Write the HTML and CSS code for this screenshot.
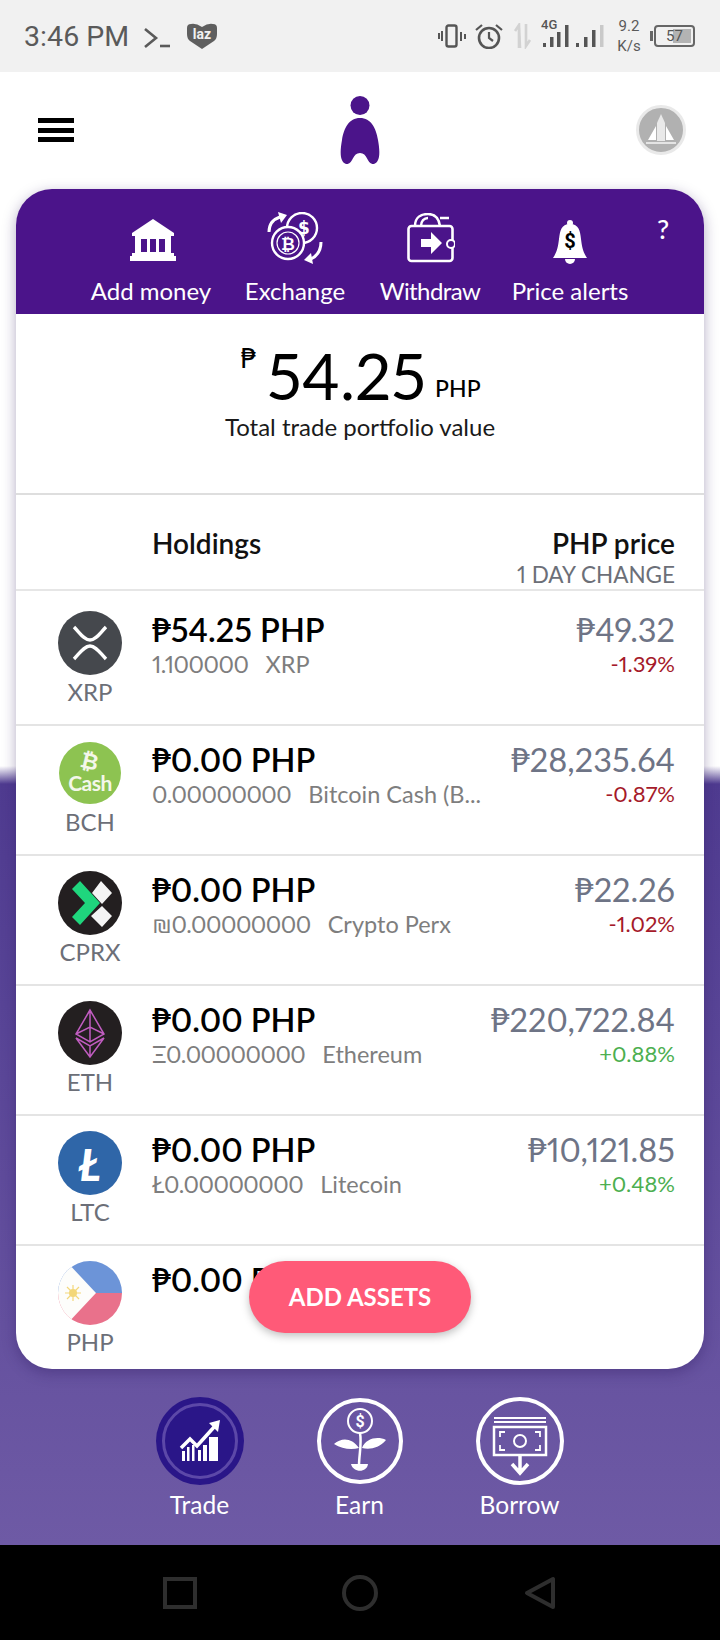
FILE: index.html
```html
<!DOCTYPE html>
<html lang="en">
<head>
  <meta charset="UTF-8">
  <title>Trade</title>
  <meta name="viewport" content="width=device-width, initial-scale=1">
  <link rel="stylesheet" href="styles.css">
</head>
<body>
  <div class="status-bar">
    <div class="status-left">
      <span class="clock">3:46 PM</span>
      <svg class="ic-prompt" width="28" height="22" viewBox="0 0 28 22"><path d="M2 2l11 9L2 20" fill="none" stroke="#5a5a5a" stroke-width="2.6"/><path d="M17 19h10" stroke="#5a5a5a" stroke-width="2.6"/></svg>
      <svg class="ic-laz" width="30" height="26" viewBox="0 0 30 26"><path d="M15 26L3 18Q0 16 0 11V5Q0 1 4 1Q9 0 15 4Q21 0 26 1Q30 1 30 5V11Q30 16 27 18Z" fill="#5f5f5f"/><text x="15" y="16" class="laz-text">laz</text></svg>
    </div>
    <div class="status-right">
      <svg width="28" height="24" viewBox="0 0 28 24"><rect x="8.5" y="1.5" width="10" height="21" rx="2" fill="none" stroke="#555" stroke-width="2.4"/><path d="M4 7v10M1 9v6M23 8v9M27 10v5" stroke="#555" stroke-width="2"/></svg>
      <svg class="ic-alarm" width="28" height="26" viewBox="0 0 28 26"><circle cx="14" cy="15" r="10" fill="none" stroke="#555" stroke-width="2.6"/><path d="M14 9v6l4 3M1 7l6-5M27 7l-6-5" fill="none" stroke="#555" stroke-width="2.2"/></svg>
      <svg class="ic-arrows" width="18" height="26" viewBox="0 0 18 26"><path d="M5 25V3M1 8l4-6 1 23M12 1v22l4-6" fill="none" stroke="#cfcfcf" stroke-width="2.6"/></svg>
      <div class="signal">
        <span class="net">4G</span>
        <svg width="66" height="24" viewBox="0 0 66 24"><g fill="#555"><rect x="3" y="19" width="3" height="4"/><rect x="10" y="13" width="3.5" height="10"/><rect x="17" y="8" width="3.5" height="15"/><rect x="25" y="1" width="3.5" height="22"/><rect x="36" y="19" width="3" height="4"/><rect x="44" y="13" width="3.5" height="10"/><rect x="52" y="6" width="3.5" height="17"/></g><rect x="60" y="1" width="3.5" height="22" fill="#c9c9c9"/></svg>
      </div>
      <div class="speed"><span>9.2</span><span>K/s</span></div>
      <div class="battery"><span class="battery-fill"></span><span class="battery-num">57</span></div>
    </div>
  </div>

  <div class="app">
    <div class="top-bar">
      <div class="burger"><span></span><span></span><span></span></div>
      <svg class="logo" width="40" height="68" viewBox="0 0 40 68"><ellipse cx="20" cy="9.500" rx="9.500" ry="9.500" fill="#4b148a"/><path d="M20 22C31 22 36 32 38 44C40 55 40.500 66 34 68C27 69 28 57 20 57C12 57 13 69 6 68C-0.500 66 0 55 2 44C4 32 9 22 20 22Z" fill="#4b148a"/></svg>
      <div class="avatar">
        <svg width="40" height="40" viewBox="0 0 40 40"><path d="M20 4l4 9v18h-8V13Z" fill="#e9e9e9"/><path d="M15 16L7 30h8ZM25 16l8 14h-8Z" fill="#fff"/><path d="M5 33h30" stroke="#e4e4e4" stroke-width="2"/></svg>
      </div>
    </div>

    <div class="card">
      <div class="actions">
        <div class="action">
          <svg class="ic-bank" width="46" height="42" viewBox="0 0 46 42"><path d="M23 0L44 14V17H2V14Z" fill="#fff"/><path d="M5 17h36v17H5ZM2 34h42v3H2ZM0 37h46v5H0Z" fill="#fff"/><path d="M11 20h6v13h-6ZM20 20h6v13h-6ZM29 20h6v13h-6Z" fill="#4b148a"/></svg>
          <span>Add money</span>
        </div>
        <div class="action">
          <svg width="56" height="52" viewBox="0 0 56 52">
            <circle cx="35" cy="16" r="15" fill="none" stroke="#fff" stroke-width="2.4"/>
            <circle cx="21" cy="31" r="16" fill="#4b148a" stroke="#fff" stroke-width="2.4"/>
            <circle cx="21" cy="31" r="11" fill="none" stroke="#fff" stroke-width="1.2"/>
            <text x="37" y="22" class="coin-text">$</text>
            <text x="21" y="38" class="coin-text">₿</text>
            <path d="M2 20C2 12 7 7 13 5" fill="none" stroke="#fff" stroke-width="3"/><path d="M11 0l9 3-6 8Z" fill="#fff"/>
            <path d="M54 30C54 38 50 44 44 47" fill="none" stroke="#fff" stroke-width="3"/><path d="M46 52l-9-4 7-7Z" fill="#fff"/>
          </svg>
          <span>Exchange</span>
        </div>
        <div class="action">
          <svg class="ic-wallet" width="48" height="50" viewBox="0 0 48 50">
            <rect x="1.500" y="13" width="44" height="35" rx="3" fill="none" stroke="#fff" stroke-width="2.6"/>
            <path d="M8 13C8 4 14 1 21 1C28 1 32 6 33 13M14 13C14 8 17 5 21 5M33 5h9" fill="none" stroke="#fff" stroke-width="2.4"/>
            <path d="M14 26h10v-7l11 11-11 11v-7H14Z" fill="#fff"/>
            <circle cx="44" cy="31" r="4" fill="#4b148a" stroke="#fff" stroke-width="2"/>
          </svg>
          <span class="tight">Withdraw</span>
        </div>
        <div class="action">
          <svg width="36" height="44" viewBox="0 0 36 44">
            <circle cx="18" cy="3" r="3" fill="#fff"/>
            <path d="M18 4C27 4 28 11 29 19C30 27 31 32 35 38H1C5 32 6 27 7 19C8 11 9 4 18 4Z" fill="#fff"/>
            <path d="M13 39h10a5 5 0 0 1-10 0Z" fill="#fff"/>
            <text x="18" y="28" class="bell-text">$</text>
          </svg>
          <span>Price alerts</span>
        </div>
        <div class="help">?</div>
      </div>

      <div class="total">
        <div class="total-amount">
          <span class="total-sign">₱</span>
          <span class="total-num">54.25</span>
          <span class="total-cur">PHP</span>
        </div>
        <div class="total-label">Total trade portfolio value</div>
      </div>

      <div class="list-head">
        <div class="list-title">Holdings</div>
        <div class="list-right">
          <div class="list-title">PHP price</div>
          <div class="list-sub">1 DAY CHANGE</div>
        </div>
      </div>

      <div class="row row-first">
        <div class="asset">
          <svg width="64" height="64" viewBox="0 0 64 64"><circle cx="32" cy="32" r="32" fill="#45484d"/><path d="M16 16C22 22 26 29 32 29C38 29 42 22 48 16M16 48C22 42 26 35 32 35C38 35 42 42 48 48" fill="none" stroke="#fff" stroke-width="3.400"/></svg>
          <span>XRP</span>
        </div>
        <div class="holding">
          <div class="value">₱54.25 PHP</div>
          <div class="sub"><span class="qty">1.100000</span><span>XRP</span></div>
        </div>
        <div class="price">
          <div class="price-num">₱49.32</div>
          <div class="down">-1.39%</div>
        </div>
      </div>

      <div class="row">
        <div class="asset">
          <svg width="64" height="64" viewBox="0 0 64 64"><circle cx="32" cy="32" r="31" fill="#8dc351"/><text x="32" y="28" class="bch-b" transform="rotate(14 32 18)">₿</text><text x="32" y="50" class="bch-cash">Cash</text></svg>
          <span>BCH</span>
        </div>
        <div class="holding">
          <div class="value">₱0.00 PHP</div>
          <div class="sub"><span class="qty">0.00000000</span><span>Bitcoin Cash (B...</span></div>
        </div>
        <div class="price">
          <div class="price-num">₱28,235.64</div>
          <div class="down">-0.87%</div>
        </div>
      </div>

      <div class="row">
        <div class="asset">
          <svg width="64" height="64" viewBox="0 0 64 64"><circle cx="32" cy="32" r="32" fill="#231f20"/><path d="M14 18l8-8 20 22-20 22-8-8 13-14Z" fill="#1fd67d"/><path d="M43 10l11 12-10 11-10-11ZM44 35l10 10-10 11-11-11Z" fill="#f4f4f4"/></svg>
          <span>CPRX</span>
        </div>
        <div class="holding">
          <div class="value">₱0.00 PHP</div>
          <div class="sub"><span class="qty">₪0.00000000</span><span>Crypto Perx</span></div>
        </div>
        <div class="price">
          <div class="price-num">₱22.26</div>
          <div class="down">-1.02%</div>
        </div>
      </div>

      <div class="row">
        <div class="asset">
          <svg width="64" height="64" viewBox="0 0 64 64"><circle cx="32" cy="32" r="32" fill="#231f20"/><path d="M32 9L18 33l14 8 14-8ZM32 9v32M18 33l14-7 14 7M18 37l14 19 14-19-14 8ZM32 45v11" fill="none" stroke="#c05cc0" stroke-width="1.500"/></svg>
          <span>ETH</span>
        </div>
        <div class="holding">
          <div class="value">₱0.00 PHP</div>
          <div class="sub"><span class="qty">Ξ0.00000000</span><span>Ethereum</span></div>
        </div>
        <div class="price">
          <div class="price-num">₱220,722.84</div>
          <div class="up">+0.88%</div>
        </div>
      </div>

      <div class="row">
        <div class="asset">
          <svg width="64" height="64" viewBox="0 0 64 64"><circle cx="32" cy="32" r="32" fill="#2f66a8"/><text x="32" y="50" class="ltc-text">Ł</text></svg>
          <span>LTC</span>
        </div>
        <div class="holding">
          <div class="value">₱0.00 PHP</div>
          <div class="sub"><span class="qty">Ł0.00000000</span><span>Litecoin</span></div>
        </div>
        <div class="price">
          <div class="price-num">₱10,121.85</div>
          <div class="up">+0.48%</div>
        </div>
      </div>

      <div class="row row-last">
        <div class="asset">
          <svg width="64" height="64" viewBox="0 0 64 64"><clipPath id="flag"><circle cx="32" cy="32" r="32"/></clipPath><g clip-path="url(#flag)"><rect width="64" height="32" fill="#6c94d8"/><rect y="32" width="64" height="32" fill="#e9718b"/><path d="M0 0h8l30 32L8 64H0Z" fill="#fdfdfb"/><circle cx="15" cy="32" r="4" fill="#f3d77a"/><path d="M15 24v16M7 32h16M9 26l12 12M21 26L9 38" stroke="#f3d77a" stroke-width="1.200"/></g></svg>
          <span>PHP</span>
        </div>
        <div class="holding">
          <div class="value">₱0.00 PHP</div>
        </div>
      </div>

      <button class="fab">ADD ASSETS</button>
    </div>

    <div class="tabs">
      <div class="tab">
        <svg width="88" height="90" viewBox="0 0 88 90">
          <circle cx="44" cy="45" r="44" fill="#2a1688"/>
          <circle cx="44" cy="45" r="36.500" fill="none" stroke="#5c48a8" stroke-width="3"/>
          <path d="M25 52L34 43 41 50 59 30" fill="none" stroke="#fff" stroke-width="3.500"/>
          <path d="M53 27l11-3-2 12Z" fill="#fff"/>
          <path d="M26 55h3v10h-3ZM31 51h2.500v14H31ZM36 49h2.500v16H36ZM42 54h3v11h-3ZM47 49h4v16h-4ZM53 41h9v24h-9Z" fill="#fff"/>
        </svg>
        <span>Trade</span>
      </div>
      <div class="tab">
        <svg width="88" height="90" viewBox="0 0 88 90">
          <circle cx="44" cy="45" r="41" fill="none" stroke="#fff" stroke-width="4"/>
          <circle cx="44" cy="25" r="12" fill="none" stroke="#fff" stroke-width="2"/>
          <text x="44" y="31" class="earn-text">$</text>
          <path d="M44 37C46 48 43 58 43 70" fill="none" stroke="#fff" stroke-width="2.500"/>
          <path d="M43 52C36 42 26 41 18 48C26 53 35 54 43 52ZM46 52C50 42 62 40 70 44C63 52 54 54 46 52Z" fill="#fff"/>
          <path d="M35 68h17C51 77 37 77 35 68Z" fill="#fff"/>
        </svg>
        <span>Earn</span>
      </div>
      <div class="tab">
        <svg width="88" height="90" viewBox="0 0 88 90">
          <circle cx="44" cy="45" r="42" fill="none" stroke="#fff" stroke-width="4"/>
          <path d="M18 22h52M18 26h52" stroke="#fff" stroke-width="2"/>
          <rect x="18" y="31" width="52" height="28" fill="none" stroke="#fff" stroke-width="2.500"/>
          <circle cx="44" cy="45" r="6" fill="none" stroke="#fff" stroke-width="2"/>
          <path d="M24 41v-5h5M64 41v-5h-5M24 49v5h5M64 49v5h-5" fill="none" stroke="#fff" stroke-width="1.800"/>
          <path d="M44 60v16M36 68l8 9 8-9" fill="none" stroke="#fff" stroke-width="3.500"/>
        </svg>
        <span>Borrow</span>
      </div>
    </div>
  </div>

  <div class="nav-bar">
    <svg width="34" height="32" viewBox="0 0 34 32"><rect x="2" y="2" width="30" height="28" fill="none" stroke="#2e2e2e" stroke-width="4"/></svg>
    <svg width="36" height="36" viewBox="0 0 36 36"><circle cx="18" cy="18" r="16" fill="none" stroke="#2e2e2e" stroke-width="4"/></svg>
    <svg width="32" height="34" viewBox="0 0 32 34"><path d="M29 3v28L3 17Z" fill="none" stroke="#2e2e2e" stroke-width="4" stroke-linejoin="round"/></svg>
  </div>
</body>
</html>
```

FILE: styles.css
```css
* { box-sizing: border-box; }

body {
  margin: 0;
  width: 720px;
  height: 1640px;
  overflow: hidden;
  font-family: "Lato", "DejaVu Sans", sans-serif;
  font-variant-numeric: proportional-nums;
  background: #000;
}

/* status bar */
.status-bar {
  height: 72px;
  background: #f1f1f1;
  display: flex;
  justify-content: space-between;
  align-items: center;
  padding: 0 25px 0 24px;
  color: #5a5a5a;
}

.status-left, .status-right { display: flex; align-items: center; }
.clock { font-family: "Roboto", sans-serif; font-size: 28.500px; margin-right: 14px; }
.ic-prompt { margin-right: 16px; margin-top: 4px; }
.ic-laz { margin-top: 0; }
.laz-text { font: 700 14px "Roboto", sans-serif; fill: #f1f1f1; text-anchor: middle; }

.ic-alarm { margin-left: 9px; }
.ic-arrows { margin-left: 11px; opacity: 0.9; }
.signal { position: relative; margin-left: 8px; padding-top: 3px; }
.net { position: absolute; top: -4px; left: 1px; font: 500 13px "Roboto", sans-serif; color: #555; }
.speed { display: flex; flex-direction: column; width: 24px; font: 15px/20px "Roboto", sans-serif; text-align: center; margin-left: 11px; white-space: nowrap; align-items: center; }
.battery {
  position: relative;
  width: 41px;
  height: 22px;
  margin-left: 13px;
  border: 2px solid #666;
  border-radius: 4px;
  display: flex;
  align-items: center;
  justify-content: center;
  font: 15px "Roboto", sans-serif;
  color: #555;
}
.battery::before {
  content: "";
  position: absolute;
  left: -6px;
  top: 4px;
  width: 3px;
  height: 10px;
  background: #666;
}
.battery-fill { position: absolute; top: 2px; right: 2px; bottom: 2px; width: 18px; background: #b3b3b3; }
.battery-num { position: relative; }

/* main area */
.app {
  height: 1473px;
  background: linear-gradient(to bottom, #fff 0, #fff 694px, #4f3b90 712px, #6e5aa5 100%);
}

.top-bar {
  height: 117px;
  position: relative;
  display: flex;
  align-items: center;
  justify-content: center;
  background: #fff;
}
.logo { margin-top: -1px; }
.burger { position: absolute; left: 38px; top: 46px; width: 36px; }
.burger span { display: block; height: 5px; background: #000; margin-bottom: 4.500px; }
.avatar {
  position: absolute;
  left: 636px;
  top: 33px;
  width: 50px;
  height: 50px;
  border-radius: 50%;
  background: #b1b1b1;
  border: 3px solid #e9e9e9;
  display: flex;
  align-items: center;
  justify-content: center;
}

.card {
  position: relative;
  height: 1180px;
  margin: 0 16px;
  background: #fff;
  border-radius: 36px;
  overflow: hidden;
  box-shadow: 0 4px 14px rgba(40, 20, 90, 0.35);
}

.actions {
  height: 125px;
  background: #4b148a;
  display: grid;
  grid-template-columns: 150px 138px 132px 148px 38px;
  padding-left: 60px;
  color: #fff;
}
.action {
  display: flex;
  flex-direction: column;
  align-items: center;
  justify-content: flex-end;
  padding-bottom: 9px;
  font-size: 24px;
}
.action span { margin-top: 13px; line-height: 28px; white-space: nowrap; }
.action .tight { letter-spacing: -0.600px; }
.ic-bank { margin: 0 0 3px 3px; }
.ic-wallet { margin: 0 0 1px 2px; }
.help { font-size: 27px; font-weight: 500; text-align: center; padding-top: 23px; }

.total {
  height: 181px;
  border-bottom: 2px solid #dedede;
  text-align: center;
  padding-top: 27px;
}
.total-amount { display: flex; justify-content: center; align-items: flex-start; color: #000; margin-left: 1px; }
.total-sign { font-size: 26px; line-height: 26px; margin: 5px 10px 0 0; font-family: "DejaVu Sans", sans-serif; }
.total-num { font-size: 64px; line-height: 70px; }
.total-cur { font-size: 23px; line-height: 28px; margin: 33px 0 0 9px; font-weight: 500; }
.total-label { font-size: 24px; line-height: 28px; color: #1a1a1a; margin-top: 2px; }

.list-head {
  height: 96px;
  border-bottom: 2px solid #e6e6e6;
  display: flex;
  justify-content: space-between;
  padding: 32px 29px 0 136px;
}
.list-title { font-size: 28px; line-height: 32px; font-weight: 600; color: #111; }
.list-right { text-align: right; }
.list-sub { font-size: 22.500px; line-height: 28px; color: #6c6f78; margin-top: 2px; white-space: nowrap; }

.row {
  height: 130px;
  display: flex;
  padding: 15px 29px 0 26px;
  border-bottom: 2px solid #e4e4e4;
}
.row-first { height: 135px; padding-top: 20px; }
.row-last { border-bottom: none; }

.asset {
  width: 96px;
  margin-right: 14px;
  display: flex;
  flex-direction: column;
  align-items: center;
  font-size: 24px;
  line-height: 28px;
  color: #6c6f78;
  flex-shrink: 0;
}
.asset span { margin-top: 3px; }

.holding { flex: 1; white-space: nowrap; }
.value { font-size: 32.500px; line-height: 36px; font-weight: 600; color: #000; margin-top: 1px; }
.sub { font-size: 23.500px; line-height: 28px; color: #7e7e7e; margin-top: 2px; display: flex; gap: 17px; }
.qty { letter-spacing: -0.500px; }

.price { text-align: right; white-space: nowrap; }
.price-num { font-size: 32.500px; line-height: 36px; color: #6e7486; margin-top: 1px; }
.down, .up { font-size: 22px; line-height: 28px; margin-top: 2px; }
.down { color: #a51a2a; }
.up { color: #4caf50; }

/* svg labels */
.coin-text { font: 700 17px "DejaVu Sans", sans-serif; fill: #fff; text-anchor: middle; }
.bell-text { font: 700 20px "Roboto", sans-serif; fill: #000; text-anchor: middle; }
.bch-b { font: 700 22px "DejaVu Sans", sans-serif; fill: #f4f7ea; text-anchor: middle; }
.bch-cash { font: 700 21px "Lato", sans-serif; fill: #f4f7ea; text-anchor: middle; letter-spacing: -0.5px; }
.ltc-text { font: italic 900 44px "Lato", sans-serif; fill: #fff; text-anchor: middle; }
.earn-text { font: 700 16px "Roboto", sans-serif; fill: #fff; text-anchor: middle; }

.fab {
  position: absolute;
  left: 233px;
  bottom: 36px;
  width: 222px;
  height: 72px;
  border: none;
  border-radius: 36px;
  background: #ff5a78;
  color: #fff;
  font: 700 24px "Lato", sans-serif;
  padding-bottom: 2px;
  box-shadow: 0 3px 8px rgba(0, 0, 0, 0.25);
}

.tabs {
  display: grid;
  grid-template-columns: 160px 160px 160px;
  justify-content: center;
  padding-top: 27px;
  margin-left: -1px;
}
.tab {
  display: flex;
  flex-direction: column;
  align-items: center;
  color: #fff;
  font-size: 24.500px;
}
.tab span { margin-top: 5px; line-height: 28px; }

.nav-bar {
  height: 95px;
  background: #000;
  display: grid;
  grid-template-columns: 180px 180px 180px;
  justify-content: center;
  justify-items: center;
  align-items: center;
}
```
